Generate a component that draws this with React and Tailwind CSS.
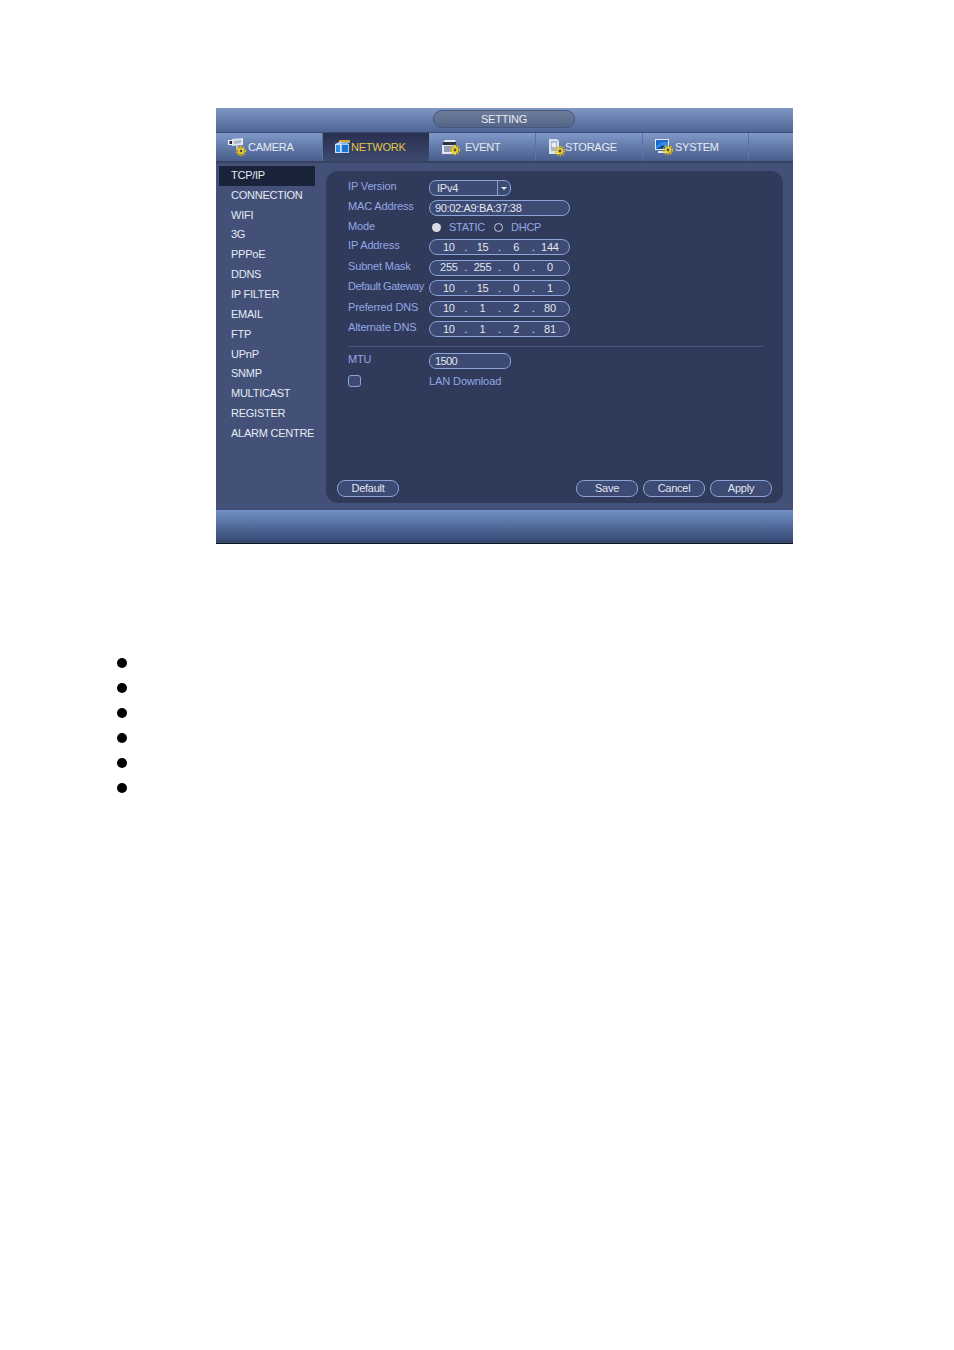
import React from "react";

const tabs = [
  { name: "CAMERA", w: "w-[107px]", pad: "pl-[12px]", gap: "gap-0", icon: <CameraIcon /> },
  { name: "NETWORK", w: "w-[106px]", pad: "pl-[12px]", gap: "gap-0", icon: <NetworkIcon />, active: true },
  { name: "EVENT", w: "w-[107px]", pad: "pl-[13px]", gap: "gap-[4px]", icon: <EventIcon /> },
  { name: "STORAGE", w: "w-[107px]", pad: "pl-[13px]", gap: "gap-0", icon: <StorageIcon /> },
  { name: "SYSTEM", w: "w-[106px]", pad: "pl-[12px]", gap: "gap-[2px]", icon: <SystemIcon /> },
];

const menu = [
  "TCP/IP",
  "CONNECTION",
  "WIFI",
  "3G",
  "PPPoE",
  "DDNS",
  "IP FILTER",
  "EMAIL",
  "FTP",
  "UPnP",
  "SNMP",
  "MULTICAST",
  "REGISTER",
  "ALARM CENTRE",
];

const ipRows = [
  { label: "IP Address", h: "h-[20px]", parts: ["10", "15", "6", "144"] },
  { label: "Subnet Mask", h: "h-[21px]", parts: ["255", "255", "0", "0"] },
  { label: "Default Gateway", h: "h-[20px]", parts: ["10", "15", "0", "1"], tight: true },
  { label: "Preferred DNS", h: "h-[21px]", parts: ["10", "1", "2", "80"] },
  { label: "Alternate DNS", h: "h-[20px]", parts: ["10", "1", "2", "81"] },
];

function Gear({ x = 9, y = 8 }) {
  return (
    <g transform={`translate(${x} ${y})`}>
      <circle cx="5" cy="5" r="4.4" fill="none" stroke="#e3b60f" strokeWidth="1.6" strokeDasharray="1.6 1.2" />
      <circle cx="5" cy="5" r="3.2" fill="#f5d21f" />
      <circle cx="5" cy="5" r="1.4" fill="#46506a" />
    </g>
  );
}

function CameraIcon() {
  return (
    <svg width="20" height="19" viewBox="0 0 20 19" className="shrink-0 overflow-visible">
      <rect x="0" y="2" width="5" height="5" fill="#eef1f5" />
      <rect x="1.5" y="3" width="2.5" height="3" fill="#20242c" />
      <path d="M4 1l11-1v7L4 8z" fill="#dfe4ec" />
      <path d="M6 3l7-1v3l-7 1z" fill="#aab4c6" />
      <path d="M9 8v4" stroke="#b8c0ce" strokeWidth="2" />
      <Gear x="8" y="8" />
    </svg>
  );
}

function NetworkIcon() {
  return (
    <svg width="16" height="14" viewBox="0 0 16 14" className="shrink-0 overflow-visible">
      <path d="M4 0h11v3H4z" fill="#d5a92e" />
      <path d="M0 4l4-2h5L6 4z" fill="#b7d4ef" />
      <path d="M0 4h6v9H0z" fill="#cfe2f5" />
      <path d="M1 5h4v7H1z" fill="#2f8fe6" />
      <path d="M6 4l3-2h5l-1 2z" fill="#7fb4e6" />
      <path d="M6 4h8v9H6z" fill="#a9cdee" />
      <path d="M7 5h6v7H7z" fill="#1b74d4" />
    </svg>
  );
}

function EventIcon() {
  return (
    <svg width="19" height="17" viewBox="0 0 19 17" className="shrink-0 overflow-visible">
      <path d="M1 3l2-2h10l1 2z" fill="#e8ebf0" />
      <rect x="1" y="3" width="13" height="3" fill="#2d333f" />
      <rect x="0" y="6" width="14" height="9" fill="#e3e7ed" />
      <rect x="2" y="7" width="10" height="6" fill="#8f9db3" />
      <Gear x="8" y="6" />
    </svg>
  );
}

function StorageIcon() {
  return (
    <svg width="16" height="18" viewBox="0 0 16 18" className="shrink-0 overflow-visible">
      <path d="M0 1h8l2 2v13H0z" fill="#dde3ec" />
      <path d="M2 3h6v10H2z" fill="#aab6c9" />
      <circle cx="5" cy="7" r="2.4" fill="#e9edf3" />
      <Gear x="6" y="8" />
    </svg>
  );
}

function SystemIcon() {
  return (
    <svg width="18" height="17" viewBox="0 0 18 17" className="shrink-0 overflow-visible">
      <rect x="0" y="0" width="14" height="11" fill="#e6ebf2" />
      <rect x="1" y="1" width="12" height="9" fill="#1c66cc" />
      <path d="M1 7l6-4 6 0v7H1z" fill="#2f8ae6" />
      <path d="M1 10l7-4 3 4z" fill="#0f4aa6" />
      <path d="M3 13h8" stroke="#dfe4ec" strokeWidth="2" />
      <Gear x="8" y="6" />
    </svg>
  );
}

function Label({ children, tight }) {
  return (
    <div className={`mb-[3px] w-[81px] shrink-0 whitespace-nowrap text-[#93a8e6] ${tight ? "tracking-[-0.36px]" : "tracking-[-0.15px]"}`}>
      {children}
    </div>
  );
}

function IpField({ parts }) {
  return (
    <div className="flex h-[16px] w-[141px] items-center rounded-[8px] border border-[#8ba3d6] bg-[#3c4a74] pl-[5px] text-[#e2e6ee]">
      {parts.map((p, i) => (
        <React.Fragment key={i}>
          <span className="w-[27.7px] text-center">{p}</span>
          {i < 3 && <span className="w-[6px] text-center">.</span>}
        </React.Fragment>
      ))}
    </div>
  );
}

function Btn({ children }) {
  return (
    <div className="flex h-[17px] w-[62px] items-center justify-center rounded-[8px] border border-[#8ba3d6] bg-[#3c4a74] pb-[1px] text-[#e2e6ee]">
      {children}
    </div>
  );
}

export default function App() {
  return (
    <div className="h-[1350px] w-[954px] bg-white pl-[216px] pt-[108px] font-['Liberation_Sans',Arial,sans-serif] text-[11px] leading-none tracking-[-0.25px]">
      <div className="flex h-[436px] w-[577px] flex-col border-b border-[#10151f] bg-[#435179]">
        {/* title bar */}
        <div className="flex h-[24px] shrink-0 items-center justify-center bg-gradient-to-b from-[#7f97c4] to-[#4f6695]">
          <div className="mb-[2px] ml-[-1px] flex h-[18px] w-[142px] items-center justify-center rounded-[9px] border border-[#46557a] bg-gradient-to-b from-[#6f7d9a] to-[#54648a] text-[#e8ebf0]">
            SETTING
          </div>
        </div>

        {/* tabs */}
        <div className="flex h-[31px] shrink-0 border-t border-[#3a4a70] border-b-2 border-b-[#36425f] bg-gradient-to-b from-[#7f99c9] to-[#485d8b]">
          {tabs.map((t) => (
            <div
              key={t.name}
              className={`flex h-full items-center ${t.w} ${t.pad} ${t.gap} ${t.active ? "bg-gradient-to-b from-[#28304f] to-[#3c496f] text-[#e3c34a]" : "border-r border-[#5e739f] text-[#e6eaf2]"}`}
            >
              {t.icon}
              <span>{t.name}</span>
            </div>
          ))}
        </div>

        {/* body */}
        <div className="flex min-h-0 flex-1">
          <div className="w-[110px] shrink-0 pl-[3px] pt-[3px]">
            {menu.map((m, i) => (
              <div
                key={m}
                className={`flex h-[19.85px] w-[96px] items-center whitespace-nowrap pb-[1px] pl-[12px] text-[#e6eaf2] ${i === 0 ? "bg-[#19233a]" : ""}`}
              >
                {m}
              </div>
            ))}
          </div>

          <div className="mt-[8px] flex h-[332px] w-[457px] flex-col rounded-[12px] bg-[#303a5a] pl-[22px] pr-[20px] pt-[7px]">
            <div className="flex h-[20px] items-center">
              <Label>IP Version</Label>
              <div className="flex h-[16px] w-[82px] items-center rounded-[7px] border border-[#8ba3d6] bg-[#3c4a74] text-[#e2e6ee]">
                <span className="w-[68px] border-r border-[#8ba3d6] pl-[7px] leading-[14px]">IPv4</span>
                <span className="ml-[3px] h-0 w-0 border-x-[3px] border-t-[3px] border-x-transparent border-t-[#e2e6ee]" />
              </div>
            </div>
            <div className="flex h-[20px] items-center">
              <Label>MAC Address</Label>
              <div className="flex h-[16px] w-[141px] items-center rounded-[8px] border border-[#8ba3d6] bg-[#3c4a74] pl-[5px] tracking-[-0.35px] text-[#e2e6ee]">
                90:02:A9:BA:37:38
              </div>
            </div>
            <div className="flex h-[19px] items-center">
              <Label>Mode</Label>
              <span className="ml-[3px] mb-[1px] h-[9px] w-[9px] rounded-full bg-[#d8dbe2]" />
              <span className="ml-[8px] w-[37px] whitespace-nowrap text-[#93a8e6]">STATIC</span>
              <span className="ml-[8px] mb-[1px] h-[9px] w-[9px] rounded-full border border-[#c4cce0]" />
              <span className="ml-[8px] text-[#93a8e6]">DHCP</span>
            </div>
            {ipRows.map((r) => (
              <div key={r.label} className={`flex items-center ${r.h}`}>
                <Label tight={r.tight}>{r.label}</Label>
                <IpField parts={r.parts} />
              </div>
            ))}

            <div className="mt-[7px] h-px bg-[#4a5677]" />

            <div className="mt-[4px] flex h-[20px] items-center">
              <Label>MTU</Label>
              <div className="flex h-[16px] w-[82px] items-center rounded-[7px] border border-[#8ba3d6] bg-[#3c4a74] pl-[5px] tracking-[-0.6px] text-[#e2e6ee]">
                1500
              </div>
            </div>
            <div className="flex h-[20px] items-center">
              <div className="w-[81px] shrink-0">
                <div className="h-[12px] w-[13px] rounded-[3px] border border-[#8ba3d6] bg-[#3c4a74]" />
              </div>
              <span className="tracking-[-0.1px] text-[#93a8e6]">LAN Download</span>
            </div>

            <div className="ml-[-11px] mr-[-9px] mt-auto mb-[6px] flex gap-[5px]">
              <Btn>Default</Btn>
              <div className="flex-1" />
              <Btn>Save</Btn>
              <Btn>Cancel</Btn>
              <Btn>Apply</Btn>
            </div>
          </div>
        </div>

        {/* footer */}
        <div className="h-[33px] shrink-0 bg-gradient-to-b from-[#7391c7] to-[#33466f]" />
      </div>

      {/* bullets */}
      <ul className="ml-[-99px] mt-[107px] flex flex-col">
        {[0, 1, 2, 3, 4, 5].map((i) => (
          <li key={i} className="flex h-[24.9px] items-center">
            <span className="h-[10px] w-[10px] rounded-full bg-black" />
          </li>
        ))}
      </ul>
    </div>
  );
}
